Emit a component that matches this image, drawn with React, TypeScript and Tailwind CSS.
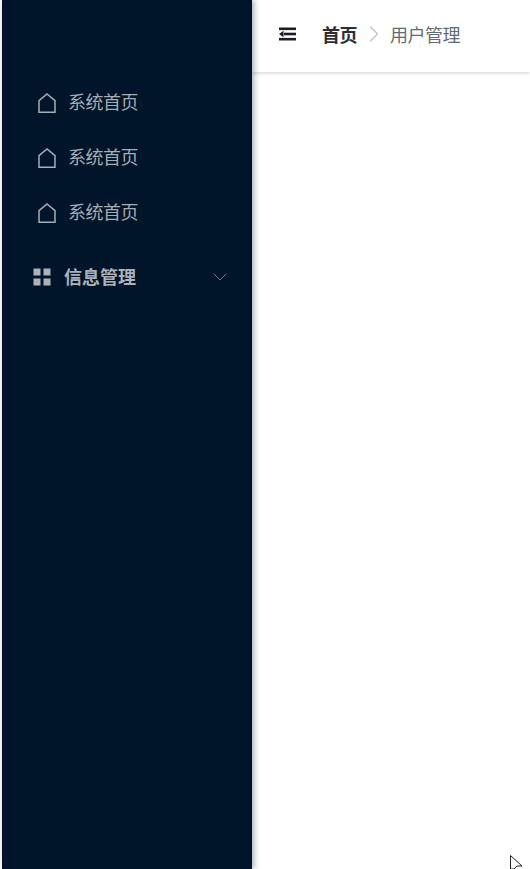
import React from 'react';
import { ChevronDown, ChevronRight } from 'lucide-react';

const cjk = "font-['Noto_Sans_CJK_SC','Noto_Sans',sans-serif]";

const HomeIcon = () => (
  <svg width="18" height="20" viewBox="0 0 18 20" fill="none" stroke="#a6adb4" strokeWidth="1.5">
    <path d="M1 19.3 V7.6 L9 1 L17 7.6 V19.3 Z" />
  </svg>
);

const GridIcon = () => (
  <svg width="18" height="18" viewBox="0 0 18 18" fill="#adb2b9">
    <rect x="0.5" y="0.5" width="7" height="7" />
    <rect x="10.5" y="0.5" width="7" height="7" />
    <rect x="0.5" y="10.5" width="7" height="7" />
    <rect x="10.5" y="10.5" width="7" height="7" />
  </svg>
);

const CollapseIcon = () => (
  <svg width="17" height="14" viewBox="0 0 17 14" fill="#1a1f26">
    <rect x="0" y="0.5" width="17" height="2.6" />
    <rect x="5" y="5.7" width="12" height="2.6" />
    <rect x="0" y="10.9" width="17" height="2.6" />
    <path d="M0 7 L4.5 3.8 V10.2 Z" />
  </svg>
);

const menuItems = ['系统首页', '系统首页', '系统首页'];

export default function App() {
  return (
    <div className={`relative flex h-[869px] w-[530px] overflow-hidden bg-white pl-[2px] ${cjk}`}>
      <aside className="z-10 h-full w-[250px] shrink-0 bg-[#001529] pt-[75px] shadow-[2px_0_6px_rgba(0,21,41,0.35)]">
        {menuItems.map((item, idx) => (
          <div key={idx} className="flex h-[55px] items-center pl-[36px] text-[18px] tracking-[-0.5px] text-[#a6adb4]">
            <HomeIcon />
            <span className="ml-[12px] pb-[2px]">{item}</span>
          </div>
        ))}
        <div className="mt-[10px] flex h-[55px] items-center pb-[1px] pl-[31px] pr-[20px] text-[#adb2b9]">
          <GridIcon />
          <span className="ml-[13px] pb-[2px] text-[18px] font-bold">信息管理</span>
          <ChevronDown size={24} strokeWidth={1} className="ml-auto text-[#6f7a86]" />
        </div>
      </aside>
      <main className="flex-1">
        <header className="flex h-[72px] items-center bg-white pb-[4px] pl-[27px] shadow-[0_1px_4px_rgba(0,21,41,0.2)]">
          <CollapseIcon />
          <span className="ml-[26px] text-[18px] tracking-[-0.5px] font-bold text-[#2b2f33]">首页</span>
          <ChevronRight size={28} strokeWidth={1.2} className="ml-[3px] mr-[2px] text-[#c0c4cc]" />
          <span className="text-[18px] tracking-[-0.5px] text-[#5f6b75]">用户管理</span>
        </header>
      </main>
      {/* mouse pointer caught in the screenshot */}
      <svg className="absolute left-[510px] top-[855px]" width="14" height="14" viewBox="0 0 14 14" fill="white" stroke="#222" strokeWidth="1">
        <path d="M0.5 0.5 L12 11 H7 L4 14 H0.5 Z" />
      </svg>
    </div>
  );
}
